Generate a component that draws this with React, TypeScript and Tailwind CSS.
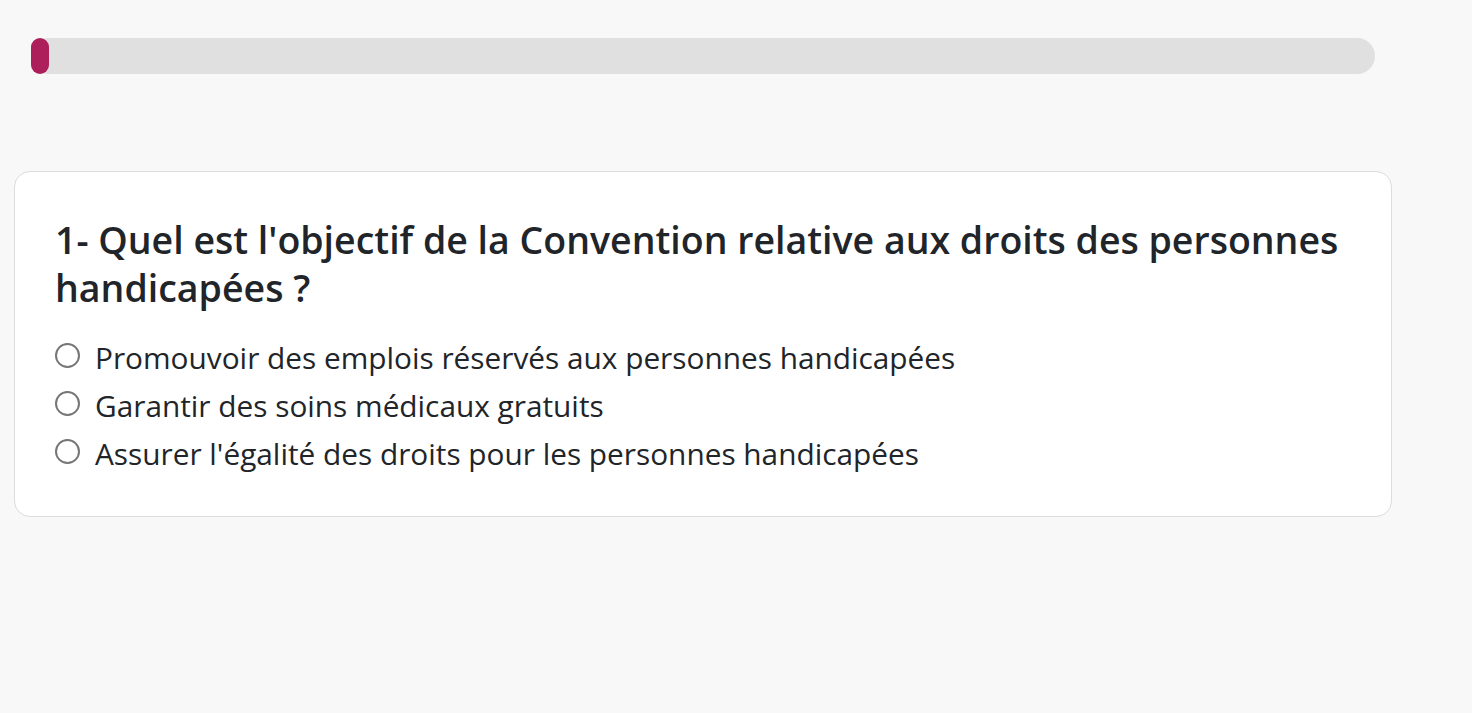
const options = [
  "Promouvoir des emplois réservés aux personnes handicapées",
  "Garantir des soins médicaux gratuits",
  "Assurer l'égalité des droits pour les personnes handicapées",
];

export default function App() {
  const progress = 1.3;

  return (
    <div
      className="min-h-[713px] bg-[#f8f8f8] text-[#212529]"
      style={{ fontFamily: '"Open Sans", "Noto Sans", sans-serif' }}
    >
      <div className="px-[31px] pt-[38px] w-[1406px]">
        <div className="h-[36px] rounded-full bg-[#e0e0e0]">
          <div
            className="h-full rounded-[9px] bg-[#ad1f5a] min-w-[18px]"
            style={{ width: `${progress}%` }}
          />
        </div>
      </div>

      <div className="pl-[14px] pt-[97px] w-[1392px]">
        <div className="rounded-2xl border border-[#dcdcdc] bg-white pl-[40px] pr-[20px] pt-[44px] pb-[38px]">
          <h2 className="text-[37.5px] leading-[48px] font-semibold">
            1- Quel est l'objectif de la Convention relative aux droits des
            personnes handicapées ?
          </h2>
          <div className="mt-[22px] flex flex-col">
            {options.map((o) => (
              <label key={o} className="flex items-center gap-[15px] h-[48px] text-[29.8px]">
                <span className="w-[25px] h-[25px] rounded-full border-2 border-[#767676] bg-white shrink-0 -mt-[5px]" />
                <span>{o}</span>
              </label>
            ))}
          </div>
        </div>
      </div>
    </div>
  );
}
